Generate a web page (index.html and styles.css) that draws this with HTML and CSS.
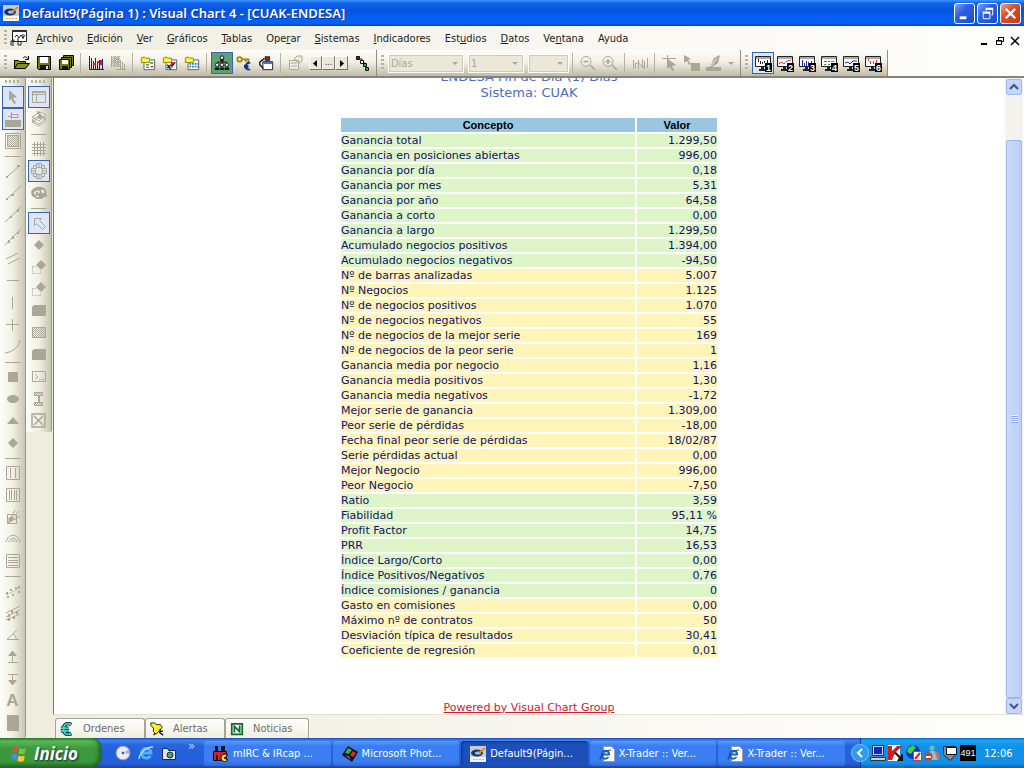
FILE: index.html
```
<!DOCTYPE html>
<html lang="es">
<head>
  <meta charset="UTF-8">
  <meta name="viewport" content="width=device-width, initial-scale=1.0">
  <title>Default9(Página 1) : Visual Chart 4 - [CUAK-ENDESA]</title>
  <link rel="stylesheet" href="styles.css">
</head>
<body>
  <!-- shared icons -->
  <svg class="defs" width="0" height="0">
    <pattern id="dots" width="2" height="2" patternUnits="userSpaceOnUse"><path fill="#a9a795" d="M0 0h1v1H0zM1 1h1v1H1z"/></pattern>
    <symbol id="vchart" viewBox="0 0 16 16">
      <path fill="#c9cdd2" d="M0 0h16v11H0z"/><path fill="#f6f6f6" d="M0 11h16v5H0z"/>
      <ellipse cx="7" cy="7" rx="6" ry="3.500" fill="#17386b"/><ellipse cx="8" cy="7" rx="3" ry="1.500" fill="#9ec7e8"/>
      <path stroke="#e58a1c" stroke-width="2" d="M9 7l6-5"/><path stroke="#d9b26a" d="M3 13.500h11" stroke-dasharray="2 1"/>
    </symbol>
    <symbol id="monitor" viewBox="0 0 18 18">
      <path fill="#fff" stroke="#222" d="M1.500 2.500h15v10h-15z"/><path fill="#aaa" d="M2 3h14v2H2z"/>
      <path fill="#222" d="M7 13h3v2H7zM5 15h6v2H5z"/>
    </symbol>
    <symbol id="folder" viewBox="0 0 18 18">
      <path fill="#fff" stroke="#555" d="M4.500 5.500h12v11h-12z"/>
      <path fill="#ffe600" stroke="#8a8a00" d="M1.500 3.500l1-1h3l1 1h4v5h-9z"/>
      <path fill="#fffb90" d="M3 5h7v2H3z"/>
    </symbol>
    <symbol id="ie-page" viewBox="0 0 16 16">
      <path fill="#fff" stroke="#999" d="M4.500.5h8l3 3v12h-11z"/>
      <path fill="none" stroke="#1d5fc4" stroke-width="2" d="M3 8.500h7c0-5-7-5-7.500 0 0 5 5 5 7 2.500"/>
      <path fill="none" stroke="#1b3f7c" d="M1 14c0-4 6-10 11-10"/>
    </symbol>
    <symbol id="diamond-copy" viewBox="0 0 16 16">
      <path fill="#a9a795" d="M10 1l5 5-5 5-5-5z"/><path fill="none" stroke="#a9a795" stroke-dasharray="1 1" d="M1.500 7.500v7h8v-3M1.500 7.500h4"/>
    </symbol>
  </svg>

  <header class="titlebar">
    <svg class="icon"><use href="#vchart"/></svg>
    <h1>Default9(Página 1) : Visual Chart 4 - [CUAK-ENDESA]</h1>
    <div class="window-buttons">
      <button aria-label="Minimizar"><svg viewBox="0 0 20 20"><path fill="#fff" d="M5 13h7v3H5z"/></svg></button>
      <button aria-label="Restaurar"><svg viewBox="0 0 20 20"><path fill="none" stroke="#fff" d="M8.500 7V5.500h7v6H14M5.500 9.500h7v6h-7z"/><path stroke="#fff" stroke-width="2" d="M8 5h8M5 9h8"/></svg></button>
      <button class="close" aria-label="Cerrar"><svg viewBox="0 0 20 20"><path stroke="#fff" stroke-width="2.500" d="M5 5l10 10M15 5L5 15"/></svg></button>
    </div>
  </header>

  <nav class="menubar">
    <span class="grip"></span>
    <svg class="icon menu-icon" viewBox="0 0 18 18"><path fill="#fff" stroke="#223" d="M2.500 1.500h14v11h-14z"/><path fill="#334" d="M3 2h13v1H3z"/><path fill="none" stroke="#222" d="M5 8l2-2 2 3 2-3 2 3 2-3M3 10v5M5 12h-4v4h3M8 9v7h3v-4M13 5v5"/></svg>
    <ul>
      <li><a href="#"><u>A</u>rchivo</a></li>
      <li><a href="#"><u>E</u>dición</a></li>
      <li><a href="#"><u>V</u>er</a></li>
      <li><a href="#"><u>G</u>ráficos</a></li>
      <li><a href="#"><u>T</u>ablas</a></li>
      <li><a href="#">Ope<u>r</u>ar</a></li>
      <li><a href="#"><u>S</u>istemas</a></li>
      <li><a href="#"><u>I</u>ndicadores</a></li>
      <li><a href="#">Est<u>u</u>dios</a></li>
      <li><a href="#"><u>D</u>atos</a></li>
      <li><a href="#">Ve<u>n</u>tana</a></li>
      <li><a href="#">Ayuda</a></li>
    </ul>
    <div class="child-buttons">
      <button aria-label="Minimizar ventana"><svg viewBox="0 0 10 10"><path fill="#000" d="M1 7h6v2H1z"/></svg></button>
      <button aria-label="Restaurar ventana"><svg viewBox="0 0 10 10"><path fill="none" stroke="#000" d="M3.500 4V1.500h5v4H7M1.500 4.500h5v4h-5zM3 1.500h6M1 5h6"/></svg></button>
      <button aria-label="Cerrar ventana"><svg viewBox="0 0 10 10"><path stroke="#000" stroke-width="1.500" d="M1 1l8 8M9 1L1 9"/></svg></button>
    </div>
  </nav>

  <div class="toolbars">
    <div class="toolbar">
      <span class="grip"></span>
      <button class="tool" aria-label="Abrir"><svg viewBox="0 0 16 16"><path fill="#8c8c1c" stroke="#000" d="M.5 13.500v-8h4l1 1h6v2M.5 13.500l3-5h12l-4 5z"/><path fill="none" stroke="#000" d="M9 3c2-2 4-1 5 1M14.500 1v3.500H11"/></svg></button>
      <button class="tool" aria-label="Guardar"><svg viewBox="0 0 16 16"><path fill="#77771c" stroke="#000" d="M1.500 1.500h13v13h-12l-1-1z"/><path fill="#fff" d="M4 2h8v6H4z"/><path fill="#111" d="M4 10h9v4H4z"/><path fill="#ddd" d="M10 11h2v3h-2z"/></svg></button>
      <button class="tool" aria-label="Guardar todo"><svg viewBox="0 0 16 16"><path fill="#77771c" stroke="#000" d="M5.500.5h10v10h-10z"/><path fill="#77771c" stroke="#000" d="M3.500 2.500h10v10h-10z"/><path fill="#77771c" stroke="#000" d="M1.500 4.500h10v10h-10z"/><path fill="#fff" d="M4 5h6v4H4z"/><path fill="#111" d="M4 11h6v3H4z"/></svg></button>
      <span class="sep"></span>
      <button class="tool" aria-label="Gráfico"><svg viewBox="0 0 16 16"><path fill="none" stroke="#1c1c8c" d="M1.500 1v13.500H16M3.500 3v11M5.500 6v8M7.500 3v11M9.500 8v6M11.500 5v9M14.500 4v10"/><path stroke="#d02020" stroke-width="2" d="M5 9h3M9 7h2M13 5v5"/></svg></button>
      <button class="tool" aria-label="Tabla" disabled><svg viewBox="0 0 16 16"><path fill="url(#dots)" d="M1 1h9v11H1z"/><path fill="none" stroke="#a9a795" d="M1.500 1v11M3 4h7M3 7h7M5 1v11M8 1v11M10.500 5v9M12.500 7v7M14.500 9v5M6 14.500h10"/></svg></button>
      <span class="sep"></span>
      <button class="tool" aria-label="Carpeta de tablas"><svg viewBox="0 0 18 18"><use href="#folder"/><path stroke="#27a03b" stroke-width="1.500" d="M7 11h3M11 9h4"/><path stroke="#d22" stroke-width="1.500" d="M7 14h3M12 13h3"/></svg></button>
      <button class="tool" aria-label="Carpeta de sistemas"><svg viewBox="0 0 18 18"><use href="#folder"/><path stroke="#d22" stroke-width="2" d="M11 14V9h4"/><path stroke="#124" stroke-width="1.500" d="M6 11l4 5M6 15l4-4"/></svg></button>
      <button class="tool" aria-label="Carpeta de datos"><svg viewBox="0 0 18 18"><use href="#folder"/><path stroke="#2b7dd2" stroke-width="2" stroke-dasharray="2 1" d="M6 10h10M6 13h10"/></svg></button>
      <span class="sep"></span>
      <button class="tool green" aria-label="Usuarios"><svg viewBox="0 0 18 18"><path fill="none" stroke="#111" d="M9 5v4M4 10V8h10v2"/><g fill="#eee" stroke="#111"><circle cx="9" cy="3" r="2"/><circle cx="3.500" cy="11" r="2"/><circle cx="9" cy="11" r="2"/><circle cx="14.500" cy="11" r="2"/></g><path fill="#111" d="M7 5h4v2H7zM1 14h5v3H1zM7 14h4v3H7zM12 14h5v3h-5z"/></svg></button>
      <button class="tool" aria-label="Clave"><svg viewBox="0 0 18 18"><circle cx="4" cy="5" r="2.500" fill="#fff" stroke="#a08800" stroke-width="2"/><path fill="none" stroke="#a08800" stroke-width="2" d="M6 5h8v3M11 5v3"/><path fill="none" stroke="#1c2c9c" stroke-width="2" d="M16 9c-3-1-5 1-5 4s2 4 5 3M9 12h5M9 14h5"/></svg></button>
      <button class="tool" aria-label="Ventana"><svg viewBox="0 0 18 18"><path fill="#fff" stroke="#111" d="M5.500 7.500h11v9h-11z"/><path fill="#1d6fd0" d="M6 8h10v2H6z"/><path fill="#b71c1c" stroke="#111" d="M8 2h5v4H8z"/><path fill="none" stroke="#111" stroke-width="1.500" d="M2 8l5-4M2 8v3l4 4"/></svg></button>
      <span class="sep"></span>
      <button class="tool" aria-label="Propiedades" disabled><svg viewBox="0 0 16 16"><path fill="#eeece2" stroke="#a9a795" d="M1.500 5.500h9v9h-9zM4 8h5M4 11h5M6 4l3-3h5v5l-3 2z"/><path fill="#a9a795" d="M3 8h1v1H3zM3 11h1v1H3z"/></svg></button>
      <div class="pager">
        <button aria-label="Anterior"><svg viewBox="0 0 5 7"><path d="M4 0v7L0 3.500z"/></svg></button>
        <button>...</button>
        <button aria-label="Siguiente"><svg viewBox="0 0 5 7"><path d="M1 0v7l4-3.500z"/></svg></button>
      </div>
      <button class="tool" aria-label="Conexiones"><svg viewBox="0 0 16 16"><path fill="none" stroke="#111" d="M4 4h4v4h3v4h2"/><path fill="#8b1a1a" stroke="#111" d="M2.500 1.500h3v3h-3z"/><path fill="#fff" stroke="#111" d="M6.500 5.500h3v3h-3z"/><path fill="#2fae4a" stroke="#111" d="M9.500 8.500h3v3h-3zM11.500 12.500h3v3h-3z"/></svg></button>
    </div>

    <div class="toolbar">
      <span class="grip"></span>
      <div class="combos">
        <label class="combo period"><select aria-label="Periodo" disabled><option>Días</option></select></label>
        <label class="combo amount"><select aria-label="Unidades" disabled><option>1</option></select></label>
        <label class="combo extra"><select aria-label="Escala" disabled><option></option></select></label>
      </div>
      <span class="sep"></span>
      <button class="tool" aria-label="Reducir" disabled><svg viewBox="0 0 16 16"><path fill="none" stroke="#a9a795" stroke-width="1.500" d="M3.500 6.500h5M10 10l5 5"/><circle cx="6" cy="6.500" r="5" fill="none" stroke="#a9a795"/></svg></button>
      <button class="tool" aria-label="Ampliar" disabled><svg viewBox="0 0 16 16"><path fill="none" stroke="#a9a795" stroke-width="1.500" d="M3.500 6.500h5M6 4v5M10 10l5 5"/><circle cx="6" cy="6.500" r="5" fill="none" stroke="#a9a795"/></svg></button>
      <span class="sep"></span>
      <button class="tool" aria-label="Comprimir" disabled><svg viewBox="0 0 16 16"><path fill="none" stroke="#a9a795" d="M1.500 5v9M3.500 8v5M3 10l3-3 5 6 2-3M6.500 5v9M10.500 4v8M12.500 6v8M15.500 3v10"/></svg></button>
      <span class="sep"></span>
      <button class="tool" aria-label="Cursor" disabled><svg viewBox="0 0 16 16"><path fill="none" stroke="#a9a795" d="M0 3.500h14M5.500 0v13"/><path fill="#a9a795" d="M6 4l8 6-4 1 2 4-2 1-2-4-2 2z"/></svg></button>
      <button class="tool" aria-label="Selección" disabled><svg viewBox="0 0 16 16"><path fill="#a9a795" d="M0 0l7 4-3 1 3 4-2 1-2-4-3 2zM7 8h9v8H7z"/></svg></button>
      <button class="tool" aria-label="Color" disabled><svg viewBox="0 0 16 16"><path fill="#a9a795" d="M0 12h15v4H0zM8 3l6-3-2 8-6 4H4z"/><path stroke="#eee" d="M5 11l6-8"/></svg></button>
      <span class="drop"></span>
    </div>

    <div class="toolbar">
      <span class="grip"></span>
      <button class="tool page checked" aria-label="Página 1"><svg viewBox="0 0 18 18"><use href="#monitor"/><path stroke="#222" d="M4.500 5v3M6.500 7v3M8.500 8v2M10.500 7v2M13.500 6v3"/><path d="M11 9h7v9h-7z"/><text x="12" y="17">1</text></svg></button>
      <button class="tool page" aria-label="Página 2"><svg viewBox="0 0 18 18"><use href="#monitor"/><path fill="none" stroke="#d33" d="M3 10l2-2 3 2 3-3 4-1"/><path d="M11 9h7v9h-7z"/><text x="12" y="17">2</text></svg></button>
      <button class="tool page" aria-label="Página 3"><svg viewBox="0 0 18 18"><use href="#monitor"/><path stroke="#22a" d="M4.500 6v6M6.500 9v3M8.500 7v5M10.500 8v4M13.500 7v5"/><path d="M11 9h7v9h-7z"/><text x="12" y="17">3</text></svg></button>
      <button class="tool page" aria-label="Página 4"><svg viewBox="0 0 18 18"><use href="#monitor"/><path stroke="#393" stroke-dasharray="2 2" d="M4 7.500h10M4 10.500h10"/><path stroke="#d33" stroke-dasharray="1 4" d="M6 7.500h8"/><path d="M11 9h7v9h-7z"/><text x="12" y="17">4</text></svg></button>
      <button class="tool page" aria-label="Página 5"><svg viewBox="0 0 18 18"><use href="#monitor"/><path fill="none" stroke="#22c" d="M3 9l3-1 2 2 3-3 4 0"/><path d="M11 9h7v9h-7z"/><text x="12" y="17">5</text></svg></button>
      <button class="tool page" aria-label="Página 6"><svg viewBox="0 0 18 18"><use href="#monitor"/><path stroke="#d33" d="M4.500 5v2M6.500 7v3M9.500 7v3M12.500 6v3"/><path d="M11 9h7v9h-7z"/><text x="12" y="17">6</text></svg></button>
    </div>
  </div>

  <div class="workspace">
    <aside class="palette full">
      <span class="grip"></span>
      <button class="tool checked" aria-label="Puntero"><svg viewBox="0 0 16 16"><path fill="#a9a795" d="M4 1l8 7-4 1 3 5-2 1-3-5-2 2z"/></svg></button>
      <button class="tool checked" aria-label="Fijar"><svg viewBox="0 0 16 16"><path fill="#a9a795" d="M0 9h16v7H0z"/><path fill="none" stroke="#b79aa0" d="M6 3.500h7v3H6zM6.500 1v7M3 5.500h3"/></svg></button>
      <button class="tool" aria-label="Trama"><svg viewBox="0 0 16 16"><path fill="none" stroke="#a9a795" d="M.5.500h15v15H.5z"/><path fill="url(#dots)" stroke="#a9a795" d="M2.500 2.500h11v11h-11z"/></svg></button>
      <span class="sep"></span>
      <button class="tool" aria-label="Segmento"><svg viewBox="0 0 16 16"><path stroke="#a9a795" d="M2 14L14 3"/><path fill="#a9a795" d="M1 13h2v2H1zM12 2h3v2h-3z"/></svg></button>
      <button class="tool" aria-label="Semirrecta"><svg viewBox="0 0 16 16"><path stroke="#a9a795" d="M1 15L16 1"/><path fill="#a9a795" d="M1 13h2v2H1zM6 9h3v2H6z"/></svg></button>
      <button class="tool" aria-label="Semirrecta derecha"><svg viewBox="0 0 16 16"><path stroke="#a9a795" d="M0 15L16 0"/><path fill="#a9a795" d="M5 9h2v2H5zM12 2h2v3h-2z"/></svg></button>
      <button class="tool" aria-label="Recta"><svg viewBox="0 0 16 16"><path stroke="#a9a795" d="M0 16L16 0"/><path fill="#a9a795" d="M3 11h2v3H3zM7 7h2v3H7zM12 3h2v2h-2z"/></svg></button>
      <button class="tool" aria-label="Paralelas"><svg viewBox="0 0 16 16"><path stroke="#a9a795" d="M1 8l12-6M3 13l12-6"/></svg></button>
      <button class="tool" aria-label="Horizontal"><svg viewBox="0 0 16 16"><path stroke="#a9a795" d="M2 7.500h12"/></svg></button>
      <button class="tool" aria-label="Vertical"><svg viewBox="0 0 16 16"><path stroke="#a9a795" d="M7.500 2v12"/></svg></button>
      <button class="tool" aria-label="Cruz"><svg viewBox="0 0 16 16"><path stroke="#a9a795" d="M7.500 2v12M1 7.500h13"/></svg></button>
      <button class="tool" aria-label="Curva"><svg viewBox="0 0 16 16"><path fill="none" stroke="#a9a795" d="M0 14C8 13 14 8 15 1"/></svg></button>
      <span class="sep"></span>
      <button class="tool" aria-label="Rectángulo"><svg viewBox="0 0 16 16"><path fill="#a9a795" d="M3 3h10v10H3z"/></svg></button>
      <button class="tool" aria-label="Elipse"><svg viewBox="0 0 16 16"><ellipse cx="8" cy="8" rx="6" ry="4" fill="#a9a795"/></svg></button>
      <button class="tool" aria-label="Triángulo"><svg viewBox="0 0 16 16"><path fill="#a9a795" d="M8 4l6 7H2z"/></svg></button>
      <button class="tool" aria-label="Rombo"><svg viewBox="0 0 16 16"><path fill="#a9a795" d="M8 3l5 5-5 5-5-5z"/></svg></button>
      <span class="sep"></span>
      <button class="tool" aria-label="Columnas"><svg viewBox="0 0 16 16"><path fill="none" stroke="#a9a795" d="M1.500 1.500h13v13h-13zM5.500 3v10M10.500 3v10"/></svg></button>
      <button class="tool" aria-label="Ciclos"><svg viewBox="0 0 16 16"><path fill="none" stroke="#a9a795" d="M1.500 1.500h13v13h-13zM4.500 3v10M6.500 3v10M9.500 3v10M11.500 3v10"/></svg></button>
      <button class="tool" aria-label="Abanico"><svg viewBox="0 0 16 16"><path fill="none" stroke="#a9a795" d="M2.500 5.500h9v9h-9zM3 14L10 1M3 14L14 2M3 14l12-7M2 10h10"/><path fill="#a9a795" d="M4 8h4v4H4z"/></svg></button>
      <button class="tool" aria-label="Arcos"><svg viewBox="0 0 16 16"><path fill="none" stroke="#a9a795" d="M1 11c2-9 12-9 14 0M4 11c1-5 7-5 8 0M6 11c1-2 3-2 4 0"/></svg></button>
      <button class="tool" aria-label="Retrocesos"><svg viewBox="0 0 16 16"><path fill="none" stroke="#a9a795" d="M1.500 1.500h13v13h-13zM3 4.500h10M3 7.500h10M3 9.500h10M3 12.500h10"/></svg></button>
      <span class="sep"></span>
      <button class="tool" aria-label="Regresión"><svg viewBox="0 0 16 16"><path stroke="#a9a795" stroke-dasharray="2 1" d="M1 12l14-7"/><path fill="#a9a795" d="M1 9h2v2H1zM5 6h2v2H5zM7 11h2v2H7zM10 4h2v2h-2zM13 8h2v2h-2zM2 13h2v2H2zM13 3h2v2h-2z"/></svg></button>
      <button class="tool" aria-label="Canal de regresión"><svg viewBox="0 0 16 16"><path stroke="#a9a795" d="M1 8l14-7M1 12l14-7M1 15l14-6"/><path fill="#a9a795" d="M3 9h2v3H3zM6 5h2v3H6zM8 11h2v3H8zM11 6h2v3h-2zM3 13h2v3H3z"/></svg></button>
      <button class="tool" aria-label="Ángulo"><svg viewBox="0 0 16 16"><path fill="none" stroke="#a9a795" d="M14 12.500H2L12 3M8 7c3 1 3 3 3 5"/></svg></button>
      <button class="tool" aria-label="Subir"><svg viewBox="0 0 16 16"><path fill="none" stroke="#a9a795" d="M7.500 5v8M3 13.500h10"/><path fill="#a9a795" d="M7 2h1l4 5H3z"/></svg></button>
      <button class="tool" aria-label="Bajar"><svg viewBox="0 0 16 16"><path fill="none" stroke="#a9a795" d="M7.500 3v7M3 3.500h10"/><path fill="#a9a795" d="M7 14h1l4-5H3z"/></svg></button>
      <button class="tool letter" aria-label="Texto">A</button>
      <button class="tool" aria-label="Relleno"><svg viewBox="0 0 16 16"><path fill="#a9a795" d="M2 0h12v16H2z"/></svg></button>
    </aside>

    <aside class="palette">
      <span class="grip"></span>
      <button class="tool checked" aria-label="Panel"><svg viewBox="0 0 16 16"><path fill="none" stroke="#a9a795" d="M1.500 2.500h13v11h-13zM5.500 6v7M2 5.500h12"/><path fill="#a9a795" d="M2 3h12v1H2z"/></svg></button>
      <button class="tool" aria-label="Capas"><svg viewBox="0 0 16 16"><path fill="#f8f7f0" stroke="#a9a795" d="M1 11l7 4 7-6-6-3zM1 9l7 4 7-6-6-3zM1 6l7 4 7-6-6-3z"/><path fill="none" stroke="#a9a795" stroke-width="2" d="M6 1c2 0 3 2 3 5M7 5l2 2 2-2"/></svg></button>
      <span class="sep"></span>
      <button class="tool" aria-label="Cuadrícula"><svg viewBox="0 0 16 16"><path stroke="#a9a795" d="M3.500 1v14M6.500 1v14M9.500 1v14M12.500 1v14M1 3.500h14M1 6.500h14M1 9.500h14M1 12.500h14"/></svg></button>
      <button class="tool checked" aria-label="Imán"><svg viewBox="0 0 16 16"><path fill="none" stroke="#a9a795" d="M5.500.5h5v4h-5zM5.500 11.500h5v4h-5zM.5 5.500h4v5h-4zM11.500 5.500h4v5h-4zM8 0v5M8 11v5M0 8h5M11 8h5M2.500 2.500h3v3h-3zM10.500 2.500h3v3h-3zM2.500 10.500h3v3h-3zM10.500 10.500h3v3h-3z"/></svg></button>
      <button class="tool" aria-label="Ver"><svg viewBox="0 0 16 16"><path fill="#a9a795" d="M0 7c2-6 12-7 15-2l1 7h-3l-2 2H6L1 11z"/><path fill="#f4f2e7" d="M3 7c3-2 5-2 6 0-2 3-4 3-6 2zM10 5l3 0v3h-2zM5 11h3v1H5z"/><circle cx="6" cy="8" r="1.500" fill="#a9a795"/></svg></button>
      <span class="sep"></span>
      <button class="tool checked" aria-label="Seleccionar"><svg viewBox="0 0 16 16"><path fill="none" stroke="#a9a795" d="M3.500 3.500h7l-2 2 6 6-3 3-6-6-2 2z"/></svg></button>
      <button class="tool" aria-label="Punto"><svg viewBox="0 0 16 16"><path fill="#a9a795" d="M8 3l5 5-5 5-5-5z"/></svg></button>
      <button class="tool" aria-label="Copiar punto"><svg><use href="#diamond-copy"/></svg></button>
      <button class="tool" aria-label="Mover punto"><svg><use href="#diamond-copy"/></svg></button>
      <button class="tool" aria-label="Cuadro"><svg viewBox="0 0 16 16"><path fill="#a9a795" d="M1 4l2-2h12v10l-1 1H1z"/></svg></button>
      <button class="tool" aria-label="Cuadro tramado"><svg viewBox="0 0 16 16"><path fill="url(#dots)" stroke="#a9a795" d="M1.500 2.500h13v10h-13z"/></svg></button>
      <button class="tool" aria-label="Cuadro redondeado"><svg viewBox="0 0 16 16"><path fill="#a9a795" d="M1 4l2-2h12v10l-1 1H1z"/></svg></button>
      <button class="tool" aria-label="Consola"><svg viewBox="0 0 16 16"><path fill="none" stroke="#a9a795" d="M1.500 2.500h13v10h-13zM4 5l3 3-3 2M8 10.500h2M11 10.500h2"/></svg></button>
      <button class="tool" aria-label="Altura"><svg viewBox="0 0 16 16"><path fill="url(#dots)" stroke="#a9a795" d="M3.500 1.500h8v3h-8zM3.500 11.500h8v3h-8z"/><path stroke="#a9a795" stroke-width="2" d="M8 5v6"/></svg></button>
      <button class="tool" aria-label="Eliminar"><svg viewBox="0 0 16 16"><path fill="none" stroke="#a9a795" stroke-width="1.500" d="M1 1h13v13H1zM3 3l9 9M12 3l-9 9"/></svg></button>
    </aside>

    <main class="document">
      <div class="viewer">
        <section class="report">
          <h2>ENDESA Fin de Día (1) Días<br>Sistema: CUAK</h2>
          <table>
            <thead>
              <tr><th>Concepto</th><th class="value">Valor</th></tr>
            </thead>
            <tbody class="group-green">
              <tr><td>Ganancia total</td><td>1.299,50</td></tr>
              <tr><td>Ganancia en posiciones abiertas</td><td>996,00</td></tr>
              <tr><td>Ganancia por día</td><td>0,18</td></tr>
              <tr><td>Ganancia por mes</td><td>5,31</td></tr>
              <tr><td>Ganancia por año</td><td>64,58</td></tr>
              <tr><td>Ganancia a corto</td><td>0,00</td></tr>
              <tr><td>Ganancia a largo</td><td>1.299,50</td></tr>
              <tr><td>Acumulado negocios positivos</td><td>1.394,00</td></tr>
              <tr><td>Acumulado negocios negativos</td><td>-94,50</td></tr>
            </tbody>
            <tbody class="group-yellow">
              <tr><td>Nº de barras analizadas</td><td>5.007</td></tr>
              <tr><td>Nº Negocios</td><td>1.125</td></tr>
              <tr><td>Nº de negocios positivos</td><td>1.070</td></tr>
              <tr><td>Nº de negocios negativos</td><td>55</td></tr>
              <tr><td>Nº de negocios de la mejor serie</td><td>169</td></tr>
              <tr><td>Nº de negocios de la peor serie</td><td>1</td></tr>
              <tr><td>Ganancia media por negocio</td><td>1,16</td></tr>
              <tr><td>Ganancia media positivos</td><td>1,30</td></tr>
              <tr><td>Ganancia media negativos</td><td>-1,72</td></tr>
              <tr><td>Mejor serie de ganancia</td><td>1.309,00</td></tr>
              <tr><td>Peor serie de pérdidas</td><td>-18,00</td></tr>
              <tr><td>Fecha final peor serie de pérdidas</td><td>18/02/87</td></tr>
              <tr><td>Serie pérdidas actual</td><td>0,00</td></tr>
              <tr><td>Mejor Negocio</td><td>996,00</td></tr>
              <tr><td>Peor Negocio</td><td>-7,50</td></tr>
            </tbody>
            <tbody class="group-green">
              <tr><td>Ratio</td><td>3,59</td></tr>
              <tr><td>Fiabilidad</td><td>95,11 %</td></tr>
              <tr><td>Profit Factor</td><td>14,75</td></tr>
              <tr><td>PRR</td><td>16,53</td></tr>
              <tr><td>Índice Largo/Corto</td><td>0,00</td></tr>
              <tr><td>Índice Positivos/Negativos</td><td>0,76</td></tr>
              <tr><td>Índice comisiones / ganancia</td><td>0</td></tr>
            </tbody>
            <tbody class="group-yellow">
              <tr><td>Gasto en comisiones</td><td>0,00</td></tr>
              <tr><td>Máximo nº de contratos</td><td>50</td></tr>
              <tr><td>Desviación típica de resultados</td><td>30,41</td></tr>
              <tr><td>Coeficiente de regresión</td><td>0,01</td></tr>
            </tbody>
          </table>
          <a class="powered" href="#">Powered by Visual Chart Group</a>
        </section>
        <div class="scrollbar">
          <button aria-label="Desplazar arriba"><svg viewBox="0 0 10 10"><path fill="none" stroke="#3f5583" stroke-width="2" d="M1 7l4-4 4 4"/></svg></button>
          <div class="track"><div class="thumb"><span></span></div></div>
          <button aria-label="Desplazar abajo"><svg viewBox="0 0 10 10"><path fill="none" stroke="#3f5583" stroke-width="2" d="M1 3l4 4 4-4"/></svg></button>
        </div>
      </div>
      <div class="tabs">
        <button class="tab-orders"><svg viewBox="0 0 16 16"><path fill="none" stroke="#123" stroke-width="4" d="M13 3C8 0 4 3 4 8s4 8 9 5M1 7h9M1 10h9"/><path fill="none" stroke="#43d6c4" stroke-width="2" d="M13 3C8 0 4 3 4 8s4 8 9 5M1 7h9M1 10h9"/></svg>Ordenes</button>
        <button class="tab-alerts"><svg viewBox="0 0 16 16"><path fill="#ffee20" stroke="#111" d="M1 4V1h4l3 2h4l2 3-7 8-3-3V7z"/><path fill="none" stroke="#111" stroke-width="1.500" d="M12 8l-1 4 4 3M15 10l-3 1M6 13l-2 2"/></svg>Alertas</button>
        <button class="tab-news"><svg viewBox="0 0 16 16"><path fill="#fff" stroke="#0c6b2c" stroke-width="2" d="M2 2h12v12H2z"/><path fill="none" stroke="#0c6b2c" stroke-width="2" d="M5 12V5l6 6V4"/></svg>Noticias</button>
      </div>
    </main>
  </div>

  <footer class="taskbar">
    <button class="start">
      <svg viewBox="0 0 18 18"><path fill="#e8502a" d="M3 3c2-1 4-1 5 0L7 8c-2-1-4-1-5 0z"/><path fill="#7dc142" d="M9 4c2 1 4 1 6 0l-1 5c-2 1-4 1-6 0z"/><path fill="#4a8be8" d="M2 10c2-1 4-1 5 0l-1 5c-2-1-4-1-5 0z"/><path fill="#fbc82c" d="M8 11c2 1 4 1 6 0l-1 5c-2 1-4 1-6 0z"/></svg>
      Inicio
    </button>
    <div class="quick">
      <button aria-label="Disco"><svg viewBox="0 0 16 16"><circle cx="8" cy="8" r="7" fill="#e8eaf4" stroke="#888fb5"/><path fill="#bba6df" d="M8 8l6-4v5z"/><circle cx="8" cy="8" r="2" fill="#3a5c9c" stroke="#fff"/></svg></button>
      <button aria-label="Internet Explorer"><svg viewBox="0 0 16 16"><path fill="none" stroke="#4fb4f5" stroke-width="3" d="M3 8h10c0-6-9-6-9.500 0 0 6 7 6 9 3"/><path fill="none" stroke="#a8dcff" stroke-width="1.500" d="M1 14C1 9 9 1 15 2"/></svg></button>
      <button aria-label="Cámara"><svg viewBox="0 0 16 16"><path fill="#dfe6ee" stroke="#1a2c54" d="M1.500 3.500h5l1 2h7v9h-13z"/><circle cx="9" cy="10" r="3" fill="#4f9b7a" stroke="#1a2c54"/></svg></button>
      <button class="more" aria-label="Más">»</button>
    </div>
    <div class="tasks">
      <button><svg viewBox="0 0 16 16"><path fill="#d81e1e" stroke="#111" d="M.5 5.500h13v9H.5z"/><path fill="#111" d="M2 0h3v6H2zM8 0h4v6H8zM3 9h2v6H3z"/><path fill="#ffe24a" stroke="#111" d="M15 9c-4-2-7 0-7 3s4 5 7 2l-4-2z"/></svg><span>mIRC &amp; IRcap ...</span></button>
      <button><svg viewBox="0 0 16 16"><path fill="#111" d="M6 0l10 6-6 10L0 9z"/><path fill="#36b34a" d="M6 2l4 2-3 4-4-1z"/><path fill="#d93030" d="M11 5l3 2-3 4-3-2z"/><path fill="#8e57d6" d="M3 9l4 1 2 4z"/></svg><span>Microsoft Phot...</span></button>
      <button class="active"><svg><use href="#vchart"/></svg><span>Default9(Págin...</span></button>
      <button><svg><use href="#ie-page"/></svg><span>X-Trader :: Ver...</span></button>
      <button><svg><use href="#ie-page"/></svg><span>X-Trader :: Ver...</span></button>
    </div>
    <div class="tray">
      <button class="collapse" aria-label="Ocultar iconos"><svg viewBox="0 0 16 16"><path fill="none" stroke="#fff" stroke-width="2" d="M10 4L6 8l4 4"/></svg></button>
      <svg viewBox="0 0 16 16"><path fill="#c9cdd6" stroke="#333" d="M2.500.5h11v10h-11zM.5 12.500h15v3H.5z"/><path fill="#1122d8" d="M4 2h8v7H4z"/></svg>
      <svg viewBox="0 0 16 16"><path fill="#fff" d="M0 0h12v16H0z"/><path fill="#d41c1c" d="M0 1h4v5l5-5h5L7 8l-3 7H0z"/><path fill="#111" d="M6 8l2-1 5 5V9h2v7H9l2-3z"/></svg>
      <svg viewBox="0 0 16 16"><circle cx="7" cy="7" r="7" fill="#1735b5"/><path fill="#3ccf49" d="M2 3l5-3 3 3-3 3-2 3-4-2z"/><path fill="#fff" stroke="#c33" d="M7.500 6.500h8v9h-8z"/><path stroke="#c22" stroke-width="2" d="M9 14l5-6"/></svg>
      <svg viewBox="0 0 16 16"><circle cx="8" cy="3" r="2.500" fill="#86b6a4"/><path fill="#9dbad0" d="M6 6h5l3 9H7z"/><path fill="#c7774c" d="M11 7h3l2 7h-3z"/><circle cx="4.500" cy="11.500" r="4" fill="#d33a1c"/><path fill="#fff" d="M2 11h5v2H2z"/></svg>
      <svg viewBox="0 0 16 16"><path fill="#888da0" stroke="#223" d="M1.500 1.500h12v8l-5 6-7-6z"/><path fill="#fff" stroke="#111" d="M4.500 2.500h10v7h-10z"/></svg>
      <span class="counter">491</span>
      <time>12:06</time>
    </div>
  </footer>
</body>
</html>
```
FILE: styles.css
```
* {
  box-sizing: border-box;
}
body {
  margin: 0;
  height: 100vh;
  display: flex;
  flex-direction: column;
  overflow: hidden;
  background: #efedde;
  font-family: "DejaVu Sans Condensed", "Noto Sans", sans-serif;
  font-size: 11px;
  color: #222;
}
button {
  margin: 0;
  padding: 0;
  border: 0;
  background: none;
  font: inherit;
  color: inherit;
}
svg {
  display: block;
  flex: none;
  width: 16px;
  height: 16px;
}
.defs {
  position: absolute;
  width: 0;
  height: 0;
}

/* title bar */
.titlebar {
  flex: none;
  display: flex;
  align-items: center;
  height: 26px;
  padding: 0 3px;
  gap: 3px;
  background: linear-gradient(#3b96ff 0, #1163ea 12%, #0553dd 40%, #0560f8 75%, #0660f5 90%, #0142c0);
  color: #fff;
}
.titlebar h1 {
  flex: 1;
  margin: 0;
  font-family: "Noto Sans", sans-serif;
  font-size: 13px;
  font-weight: 600;
  white-space: nowrap;
  text-shadow: 1px 1px #0a2f8c;
}
.window-buttons {
  display: flex;
  gap: 2px;
}
.window-buttons button {
  width: 21px;
  height: 21px;
  border: 1px solid #fff;
  border-radius: 3px;
  background: linear-gradient(135deg, #7fa3f5, #2d5fe0 40%, #1c4cc8);
}
.window-buttons svg {
  width: 19px;
  height: 19px;
}
.window-buttons .close {
  background: linear-gradient(135deg, #f0a088, #df4f28 40%, #c4380f);
}

/* menu */
.menubar {
  flex: none;
  display: flex;
  align-items: center;
  height: 24px;
  padding: 0 4px;
  background: linear-gradient(90deg, #efedde, #fbfaf6 70%, #fdfdfa);
}
.menu-icon {
  width: 18px;
  height: 18px;
  margin-left: 3px;
}
.menubar ul {
  flex: 1;
  display: flex;
  gap: 14px;
  margin: 0;
  padding: 0 0 0 8px;
  list-style: none;
}
.menubar a {
  color: #222;
  text-decoration: none;
}
.child-buttons {
  display: flex;
  gap: 5px;
  padding-top: 5px;
}
.child-buttons svg {
  width: 10px;
  height: 10px;
}
.grip {
  flex: none;
  width: 3px;
  height: 16px;
  background: repeating-linear-gradient(#b5b3a3 0 2px, transparent 2px 4px);
}

/* toolbars */
.toolbars {
  flex: none;
  display: flex;
  height: 28px;
  border-bottom: 2px solid #85837a;
  background: linear-gradient(90deg, #efedde, #fbfaf6 70%, #fdfdfa);
}
.toolbar {
  display: flex;
  align-items: center;
  padding: 0 3px 0 4px;
  border-right: 1px solid #8f8d7f;
  background: linear-gradient(#fdfdf9, #f2f0e5 45%, #bebba8);
}
.toolbar .grip {
  margin-right: 4px;
}
.tool {
  flex: none;
  display: flex;
  align-items: center;
  justify-content: center;
  width: 22px;
  height: 22px;
}
.checked {
  border: 1px solid #3a62b0;
  background: #dce6f7;
}
.green {
  border: 1px solid #3a62b0;
  background: #5e9f74;
}
.page svg {
  width: 18px;
  height: 18px;
}
.page text {
  font: bold 9px "Liberation Sans", sans-serif;
  fill: #fff;
}
.toolbar .sep {
  width: 1px;
  height: 20px;
  margin: 0 4px 0 3px;
  background: #b3b1a0;
}
.pager {
  display: flex;
  margin: 0 3px 0 2px;
}
.pager button {
  display: flex;
  align-items: center;
  justify-content: center;
  width: 13px;
  height: 14px;
  border: 1px solid;
  border-color: #fff #77756a #77756a #fff;
  background: #ece9d8;
  font-size: 8px;
  line-height: 8px;
}
.pager svg {
  width: 5px;
  height: 7px;
}
.combos {
  display: flex;
  gap: 4px;
}
.combo {
  display: flex;
  align-items: center;
  height: 19px;
  padding-right: 5px;
  border: 1px solid #fff;
  box-shadow: inset 0 0 0 1px #cdcab8;
  background: #ebe8d7;
}
.combo select {
  flex: 1;
  min-width: 0;
  padding: 0 2px;
  appearance: none;
  border: 0;
  background: none;
  font: inherit;
  color: #a9a795;
  opacity: 1;
}
.combo::after,
.drop {
  content: "";
  border: 3px solid transparent;
  border-top-color: #a9a795;
  border-bottom: 0;
}
.period {
  width: 76px;
}
.amount {
  width: 56px;
}
.extra {
  width: 41px;
}
.drop {
  margin: 0 3px;
}

/* side palettes */
.workspace {
  flex: 1;
  display: flex;
  align-items: flex-start;
  min-height: 0;
}
.palette {
  flex: none;
  display: flex;
  flex-direction: column;
  align-items: center;
  width: 26px;
  padding-top: 2px;
  border-right: 1px solid #98968a;
  border-radius: 0 0 2px 2px;
  background: linear-gradient(90deg, #fdfdf9, #f2f0e4 50%, #c9c6b3);
}
.palette.full {
  height: 100%;
}
.palette .grip {
  width: 16px;
  height: 3px;
  margin: 0 0 3px;
  background: repeating-linear-gradient(90deg, #b5b3a3 0 2px, transparent 2px 4px);
}
.palette .sep {
  flex: none;
  width: 16px;
  height: 1px;
  margin: 4px 0 3px;
  background: #a9a795;
}
.letter {
  color: #a9a795;
  font: bold 17px "Liberation Sans", sans-serif;
}

/* report */
.document {
  flex: 1;
  display: flex;
  flex-direction: column;
  align-self: stretch;
  min-width: 0;
  margin-left: 1px;
}
.viewer {
  flex: 1;
  display: flex;
  min-height: 0;
  border-left: 1px solid #77756c;
  border-bottom: 1px solid #e4e2d6;
  background: #fff;
}
.report {
  flex: 1;
  padding-right: 1px;
  overflow: hidden;
  text-align: center;
  font-family: "DejaVu Sans", sans-serif;
}
.report h2 {
  margin: -9px 0 15px;
  font-size: 13px;
  font-weight: normal;
  line-height: 16px;
  color: #4d6cc0;
}
.report table {
  width: 380px;
  margin: 0 auto 41px;
  border-spacing: 2px;
  line-height: 12px;
  color: #10106c;
}
.report th {
  padding: 0;
  background: #9bc6e2;
  font: bold 11px/14px "Liberation Sans", sans-serif;
  color: #000;
}
.report th.value {
  width: 80px;
}
.report td {
  padding: 1px 0 0;
  text-align: left;
}
.report td + td {
  text-align: right;
}
.group-green td {
  background: #def5c8;
}
.group-yellow td {
  background: #fff5b8;
}
.powered {
  line-height: 16px;
  color: #c8202c;
}

/* scroll bar */
.scrollbar {
  flex: none;
  display: flex;
  flex-direction: column;
  width: 18px;
  margin-right: 1px;
  padding: 1px 1px 0;
  background: #f4f3ee;
}
.scrollbar button {
  display: flex;
  align-items: center;
  justify-content: center;
  width: 16px;
  height: 16px;
  border: 1px solid #9db7ee;
  border-radius: 2px;
  background: #c5d5fb;
}
.scrollbar button svg {
  width: 10px;
  height: 10px;
}
.track {
  flex: 1;
  padding-top: 45px;
}
.thumb {
  display: flex;
  align-items: center;
  justify-content: center;
  height: 100%;
  border: 1px solid #9db7ee;
  border-radius: 2px;
  background: linear-gradient(90deg, #cbd9fc, #bccdf8);
}
.thumb span {
  width: 7px;
  height: 8px;
  background: repeating-linear-gradient(#f0f4ff 0 1px, #8fa9e6 1px 2px);
}

/* bottom tabs */
.tabs {
  flex: none;
  display: flex;
  height: 23px;
  padding: 3px 0 0 2px;
  background: linear-gradient(90deg, #efedde, #fbfaf6 70%, #fdfdfa);
}
.tabs button {
  display: flex;
  align-items: center;
  gap: 9px;
  padding-left: 4px;
  border: 1px solid #a5a395;
  border-bottom: 0;
  border-radius: 3px 3px 0 0;
  background: linear-gradient(#fff, #f0eee2);
  color: #6f6d64;
}
.tabs svg {
  width: 14px;
  height: 14px;
}
.tab-orders {
  width: 90px;
}
.tab-alerts {
  width: 80px;
}
.tab-news {
  width: 84px;
}

/* task bar */
.taskbar {
  flex: none;
  display: flex;
  height: 30px;
  background: linear-gradient(#1c49b4 0, #3f83ee 8%, #2763dd 25%, #245edb 85%, #1a43a8);
  color: #fff;
}
.start {
  display: flex;
  align-items: center;
  gap: 5px;
  width: 102px;
  padding-left: 10px;
  border-radius: 0 10px 12px 0;
  background: linear-gradient(#2b7a2c 0, #5cb758 10%, #3c9a3c 35%, #399839 80%, #226c22);
  box-shadow: inset -3px -1px 4px #1f6420;
  font: italic bold 17px "Open Sans", sans-serif;
  text-shadow: 1px 1px 2px #123;
}
.start svg {
  width: 19px;
  height: 19px;
}
.quick {
  display: flex;
  align-items: center;
  gap: 7px;
  width: 102px;
  padding-left: 13px;
}
.more {
  align-self: flex-start;
  margin-left: 4px;
  color: #b9d4ff;
  font-size: 13px;
}
.tasks {
  flex: 1;
  display: flex;
  gap: 2px;
  min-width: 0;
  padding: 3px 0 2px;
}
.tasks button {
  flex: 1 1 0;
  display: flex;
  align-items: center;
  gap: 4px;
  min-width: 0;
  padding-left: 9px;
  border-radius: 3px;
  background: linear-gradient(#5b9bff, #3a7df0 20%, #3a7ef2 80%, #2f6ad8);
}
.tasks .active {
  background: #1d4fb8;
  box-shadow: inset 1px 1px 2px #0e3282;
}
.tasks span {
  overflow: hidden;
  white-space: nowrap;
}
.tray {
  display: flex;
  align-items: center;
  gap: 2px;
  width: 164px;
  margin-left: 15px;
  border-left: 1px solid #0a3c9c;
  background: linear-gradient(#0c66c4 0, #1ba3f4 8%, #1290e8 30%, #1290e8 85%, #0b62b8);
}
.collapse {
  width: 16px;
  height: 16px;
  margin-left: -9px;
  border-radius: 8px;
  background: #2e9aee;
  box-shadow: 0 0 1px 1px #7cc4f8;
}
.counter {
  width: 16px;
  background: #000;
  font: 9px/16px "Liberation Sans", sans-serif;
  text-align: center;
}
.tray time {
  margin-left: 6px;
}
```
